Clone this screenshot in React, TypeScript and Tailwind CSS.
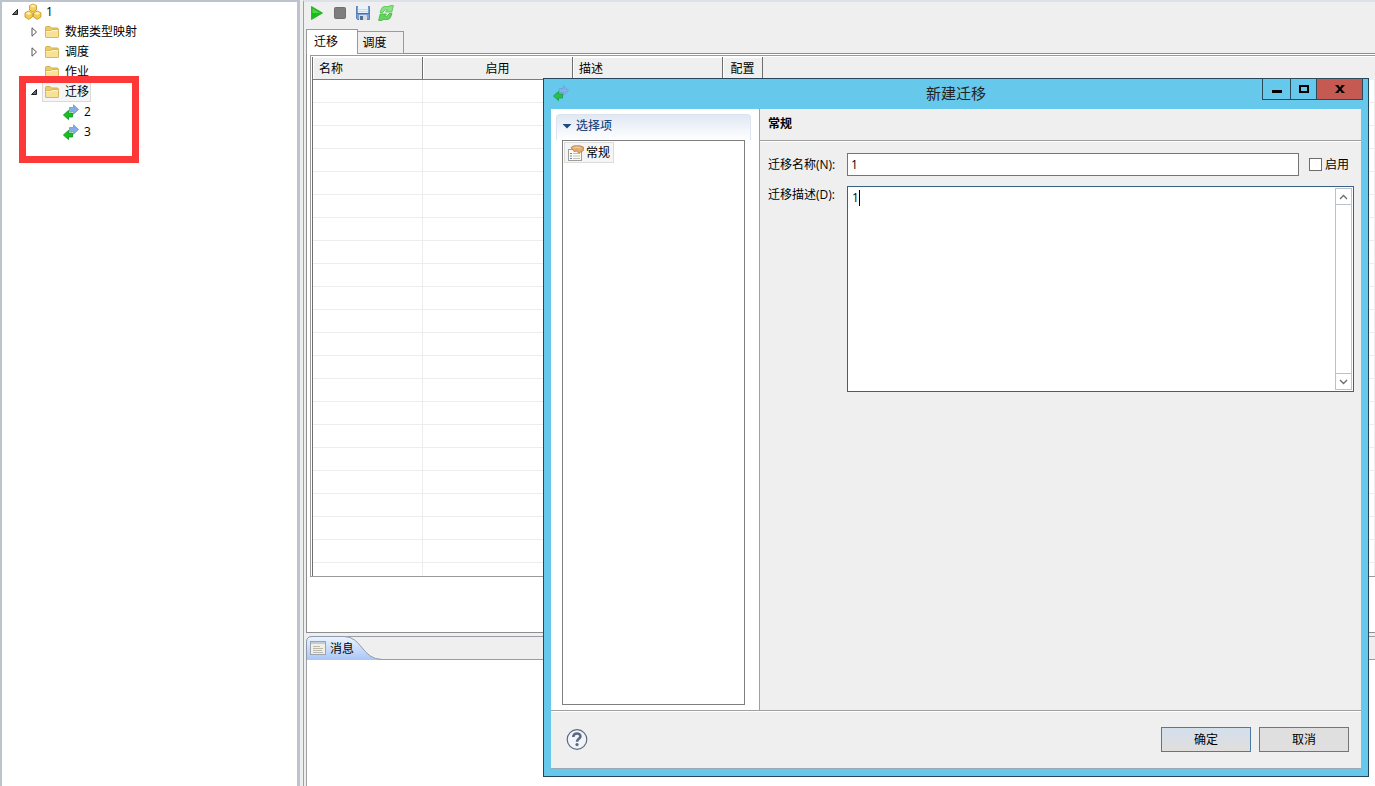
import React, { useState } from "react";

function FolderIcon() {
  return (
    <svg width="16" height="16" viewBox="0 0 16 16" className="shrink-0">
      <path d="M1.5 12.5V3.5Q1.5 2.5 2.5 2.5H6L7.5 4H13Q14.5 4 14.5 5.5V12.5Z" fill="#eccb68" stroke="#d3ae4f" />
      <path d="M1.5 13V7.5Q1.5 6.5 2.5 6.5H6.5L8 5.5H13.5Q14.5 5.5 14.5 6.5V13Q14.5 13.5 14 13.5H2Q1.5 13.5 1.5 13Z" fill="#f7e196" stroke="#d9b75c" />
      <path d="M2.5 7.5H7L8.5 6.5H13.5" stroke="#fff4c4" fill="none" />
    </svg>
  );
}

function MigrateIcon() {
  return (
    <svg width="16" height="16" viewBox="0 0 16 16" className="shrink-0">
      <path d="M6.5 3.5H10.5V0.8L15.6 5.5L10.5 10.2V7.5H6.5Z" fill="#86aee6" stroke="#6b97d6" strokeWidth="0.8" />
      <path d="M9.5 9H5.5V6.4L0.4 11L5.5 15.6V13H9.5Z" fill="#14c21e" stroke="#0b8f16" strokeWidth="0.8" />
    </svg>
  );
}

function ProjectIcon() {
  return (
    <svg width="18" height="18" viewBox="0 0 18 18" className="shrink-0">
      <g stroke="#c99a2c" strokeWidth="0.9" strokeLinejoin="round">
        <path d="M9 1L12.5 2.6V7L9 9L5.5 7V2.6Z" fill="#f5d35a" />
        <path d="M4.7 8L8.4 9.8V14L4.7 16.4L1 14V9.8Z" fill="#f3cd4f" />
        <path d="M13.2 8L16.9 9.8V14L13.2 16.4L9.5 14V9.8Z" fill="#f3cd4f" />
      </g>
      <path
        d="M9 1.6L12 3L9 4.6L6 3ZM4.7 8.7L7.8 10.2L4.7 11.9L1.6 10.2ZM13.2 8.7L16.3 10.2L13.2 11.9L10.1 10.2Z"
        fill="#fdf0b0"
      />
    </svg>
  );
}

function FormIcon() {
  return (
    <svg width="16" height="16" viewBox="0 0 16 16" className="shrink-0">
      <rect x="0.5" y="4.5" width="13" height="11" fill="#fbfaf4" stroke="#a09e94" />
      <path d="M2 8.5H4M2 11H4M2 13.5H4" stroke="#5c86b0" />
      <path d="M5 8.5H12M5 11H12M5 13.5H12" stroke="#c3c1b4" />
      <path d="M3 2.5L6 0.8H12L15.4 2V5.5L11 8L8.5 6.2L6 6.5L5 5Z" fill="#e2ab70" stroke="#b67e45" strokeWidth="0.8" />
      <path d="M5.5 3L9 2L13 3.2" stroke="#f7d5a8" fill="none" />
    </svg>
  );
}

function Twisty({ open }: { open: boolean }) {
  return (
    <svg width="10" height="10" viewBox="0 0 10 10" className="shrink-0">
      {open ? (
        <path d="M7.5 2.5V7.5H2.5Z" fill="#6a6a6a" stroke="#222" />
      ) : (
        <path d="M3 0.8L7.5 5L3 9.2Z" fill="#fff" stroke="#555" />
      )}
    </svg>
  );
}

const folders = [
  { name: "数据类型映射", expandable: true, open: false, children: [] },
  { name: "调度", expandable: true, open: false, children: [] },
  { name: "作业", expandable: false, open: false, children: [] },
  { name: "迁移", expandable: true, open: true, children: ["2", "3"] },
];

function ProjectTree() {
  return (
    <aside className="relative w-[300px] shrink-0 border-t-2 border-r-[3px] border-l-2 border-[#bcc3cd] bg-white">
      <ul role="tree">
        <li role="treeitem" aria-expanded="true">
          <div className="flex h-5 items-center pl-2">
            <Twisty open />
            <span className="ml-1 flex items-center gap-1">
              <ProjectIcon />
              1
            </span>
          </div>
          <ul role="group">
            {folders.map((f) => (
              <li key={f.name} role="treeitem">
                <div className="flex h-5 items-center pl-[27px]">
                  <span className="w-[13px]">{f.expandable && <Twisty open={f.open} />}</span>
                  <span
                    className={`flex h-5 items-center gap-[5px] border px-px ${
                      f.open ? "border-[#dadada] bg-[#f5f5f5]" : "border-transparent"
                    }`}
                  >
                    <FolderIcon />
                    {f.name}
                  </span>
                </div>
                {f.children.length > 0 && (
                  <ul role="group">
                    {f.children.map((c) => (
                      <li key={c} role="treeitem" className="flex h-5 items-center gap-[5px] pl-[61px]">
                        <MigrateIcon />
                        {c}
                      </li>
                    ))}
                  </ul>
                )}
              </li>
            ))}
          </ul>
        </li>
      </ul>
      {/* highlight box */}
      <div className="absolute top-[74px] left-[17px] h-[87px] w-[120px] border-[7px] border-[#fd3839]" />
    </aside>
  );
}

function Toolbar() {
  return (
    <div className="flex h-[27px] items-center gap-[7px] pb-[5px] pl-[3px]">
      <button aria-label="运行">
        <svg width="16" height="16" viewBox="0 0 16 16">
          <path d="M2.5 1.5L13.5 8L2.5 14.5Z" fill="#18bd1b" stroke="#2fb52f" />
          <path d="M3.5 3.5L11 8H3.5Z" fill="#4fd545" />
        </svg>
      </button>
      <button aria-label="停止">
        <svg width="16" height="16" viewBox="0 0 16 16">
          <rect x="2.5" y="2.5" width="11" height="11" rx="1" fill="#7d7d7d" stroke="#6f6f6f" />
        </svg>
      </button>
      <button aria-label="保存">
        <svg width="16" height="16" viewBox="0 0 16 16">
          <path d="M1.5 1.5H14.5V14.5H2.5L1.5 13.5Z" fill="#7d9fd3" stroke="#587fb8" />
          <rect x="3" y="1" width="10" height="7" fill="#eaf3fa" />
          <path d="M3 4.5H13M3 6.5H13" stroke="#c9dbea" />
          <path d="M2 8.5H14" stroke="#4a6fa8" />
          <rect x="4" y="10" width="8" height="5" fill="#d3dae2" />
          <rect x="5" y="11" width="3" height="4" fill="#54708f" />
        </svg>
      </button>
      <button aria-label="刷新">
        <svg width="16" height="16" viewBox="0 0 16 16">
          <path
            d="M2 7.5L3.5 3.5Q4.5 1.5 7 1.5H11L12 0.6H15.4L13.8 7H7.5L9.5 4.8H7.5Q6 4.8 5 7.5Z"
            fill="#8be283"
            stroke="#4cc24a"
            strokeWidth="0.8"
          />
          <path
            d="M14 8.5L12.5 12.5Q11.5 14.5 9 14.5H5L4 15.4H0.6L2.2 9H8.5L6.5 11.2H8.5Q10 11.2 11 8.5Z"
            fill="#62d65b"
            stroke="#3fb63e"
            strokeWidth="0.8"
          />
        </svg>
      </button>
    </div>
  );
}

const thClass =
  "border-r border-b border-r-[#6f6f6f] border-b-[#7d7d7d] px-1.5 pt-0.5 text-left font-normal shadow-[inset_1px_1px_0_#fff]";

function MigrationTable() {
  return (
    <div className="mt-px ml-[3px] h-[522px] overflow-hidden border-y border-l border-[#9a9a9a] pt-px pl-px">
      <table className="w-full table-fixed border-separate border-spacing-0 border-l border-[#6f6f6f]">
        <colgroup>
          <col className="w-[110px]" />
          <col className="w-[150px]" />
          <col className="w-[150px]" />
          <col className="w-10" />
          <col />
        </colgroup>
        <thead>
          <tr className="h-[23px] bg-[#efefef]">
            <th className={thClass}>名称</th>
            <th className={`${thClass} text-center!`}>启用</th>
            <th className={thClass}>描述</th>
            <th className={`${thClass} text-center!`}>配置</th>
            <th className="border-b border-[#efefef]" />
          </tr>
        </thead>
        <tbody>
          {Array.from({ length: 22 }, (_, i) => (
            <tr key={i} className="h-[23px]">
              {Array.from({ length: 5 }, (_, j) => (
                <td key={j} className="border-r border-b border-[#ededed] p-0" />
              ))}
            </tr>
          ))}
        </tbody>
      </table>
    </div>
  );
}

function MessagePanel() {
  return (
    <section className="mt-[3px] flex h-[150px] flex-col border-l border-[#a0a0a0] bg-white">
      <div className="relative h-6 border-y border-[#9a9ea4] bg-[#efefef]">
        <svg width="80" height="24" viewBox="0 0 80 24" className="absolute -top-px -left-px">
          <defs>
            <linearGradient id="tabFill" x1="0" y1="0" x2="0" y2="1">
              <stop offset="0" stopColor="#edf4fd" />
              <stop offset="1" stopColor="#a9c6f8" />
            </linearGradient>
          </defs>
          <path d="M0 0H6Q0.5 0.5 0.5 6H0Z" fill="#efefef" />
          <path d="M0.5 24V6Q0.5 0.5 6 0.5H38C56 0.5 56 23.5 76 23.5V24Z" fill="url(#tabFill)" />
          <path d="M0.5 24V6Q0.5 0.5 6 0.5H38C56 0.5 56 23.5 76 23.5" fill="none" stroke="#8d9aac" />
        </svg>
        <div className="relative flex h-6 items-center gap-1 pl-[3px]">
          <svg width="16" height="14" viewBox="0 0 16 14" className="-mt-0.5">
            <rect x="0.5" y="0.5" width="15" height="13" fill="#f2efe6" stroke="#9ba3ae" />
            <path d="M1 2H15" stroke="#c2cddc" strokeWidth="2" />
            <path d="M3 5.5H10M3 7.5H13M3 9.5H12M3 11.5H13" stroke="#bcb9ae" />
          </svg>
          消息
        </div>
      </div>
    </section>
  );
}

function TitleBar() {
  return (
    <header className="relative flex h-[30px] justify-between">
      <div className="mt-1.5 ml-[9px] opacity-80">
        <MigrateIcon />
      </div>
      <h1 className="absolute inset-x-0 top-0.5 text-center text-[15px] leading-6 text-[#222]">新建迁移</h1>
      <div className="relative -mt-px mr-[5px] flex h-[22px] border border-[#2b4a5a]">
        <button aria-label="最小化" className="flex w-7 items-center justify-center border-r border-[#2b4a5a]">
          <svg width="10" height="10">
            <rect y="6" width="10" height="3" fill="#000" />
          </svg>
        </button>
        <button aria-label="最大化" className="flex w-[26px] items-center justify-center border-r border-[#2b4a5a]">
          <svg width="10" height="8">
            <rect x="1" y="1" width="8" height="6" fill="none" stroke="#000" strokeWidth="2" />
          </svg>
        </button>
        <button aria-label="关闭" className="flex w-[45px] items-center justify-center bg-[#c45a52]">
          <svg width="10" height="8">
            <path d="M1.5 0L8.5 8M8.5 0L1.5 8" stroke="#000" strokeWidth="2" />
            <path d="M0.5 0.5H3.5M6.5 0.5H9.5M0.5 7.5H3.5M6.5 7.5H9.5" stroke="#000" />
          </svg>
        </button>
      </div>
    </header>
  );
}

function NewMigrationDialog() {
  const [name, setName] = useState("1");
  const [desc, setDesc] = useState("1");
  const [enabled, setEnabled] = useState(false);

  return (
    <div
      role="dialog"
      className="absolute top-[78px] right-1.5 bottom-[9px] left-[543px] flex flex-col border border-[#24455a] bg-[#66c8eb] px-[7px] pb-[7px]"
    >
      <div className="-mx-[7px]">
        <TitleBar />
      </div>
      <div className="flex min-h-0 flex-1 bg-[#efefef]">
        {/* options */}
        <div className="flex w-[209px] shrink-0 flex-col border-r border-[#a0a0a0] bg-white pt-[5px] pr-2 pb-[5px] pl-[5px]">
          <div className="flex h-[26px] items-center gap-1 rounded-t-sm border-x border-t border-[#dbe4f0] bg-linear-to-b from-[#e1e8f3] to-white px-[5px] pb-1 font-medium text-[#1f4a80]">
            <svg width="10" height="10" viewBox="0 0 10 10">
              <path d="M0.5 3H9.5L5 7.5Z" fill="#1f4a80" />
            </svg>
            选择项
          </div>
          <ul className="mr-1.5 ml-1.5 flex-1 border border-[#7f7f7f] p-px">
            <li className="flex h-[21px] w-[50px] items-center gap-0.5 border border-[#dcdcdc] bg-[#f5f5f5] pl-[3px]">
              <FormIcon />
              常规
            </li>
          </ul>
        </div>

        {/* general settings */}
        <form className="flex min-w-0 flex-1 flex-col">
          <h2 className="h-8 border-b border-[#a0a0a0] px-2 leading-[29px] font-bold shadow-[0_1px_0_#fff]">常规</h2>
          <div className="mt-3 flex h-[23px] items-center pr-3 pl-2">
            <label htmlFor="name" className="w-[79px] shrink-0">
              迁移名称(N):
            </label>
            <input
              id="name"
              type="text"
              value={name}
              onChange={(e) => setName(e.target.value)}
              className="h-[23px] min-w-0 flex-1 border border-[#757575] bg-white px-[3px] outline-none"
            />
            <input
              id="enabled"
              type="checkbox"
              checked={enabled}
              onChange={(e) => setEnabled(e.target.checked)}
              className="ml-2.5 size-[13px] appearance-none border border-[#6d6d6d] bg-white checked:bg-[#3c7fb1]"
            />
            <label htmlFor="enabled" className="ml-[3px]">
              启用
            </label>
          </div>
          <div className="mt-2.5 flex pr-[7px] pl-2">
            <label htmlFor="desc" className="w-[79px] shrink-0">
              迁移描述(D):
            </label>
            <div className="relative flex h-[206px] flex-1 border border-[#3a6186] bg-white p-px">
              <textarea
                id="desc"
                value={desc}
                onChange={(e) => setDesc(e.target.value)}
                className="flex-1 resize-none px-[3px] pt-px outline-none"
              />
              <span className="absolute top-[3px] left-[11px] h-4 w-px bg-black" />
              <div className="flex w-[17px] flex-col justify-between border border-[#b8c2c8]">
                <button type="button" aria-label="向上" className="flex h-4 items-center justify-center border-b border-[#b8c2c8]">
                  <svg width="9" height="6">
                    <path d="M1 5L4.5 1.5L8 5" fill="none" stroke="#6b6b6b" strokeWidth="1.3" />
                  </svg>
                </button>
                <button type="button" aria-label="向下" className="flex h-4 items-center justify-center border-t border-[#b8c2c8]">
                  <svg width="9" height="6">
                    <path d="M1 1L4.5 4.5L8 1" fill="none" stroke="#6b6b6b" strokeWidth="1.3" />
                  </svg>
                </button>
              </div>
            </div>
          </div>
        </form>
      </div>
      <footer className="flex h-[59px] items-center gap-2 border-t border-b border-t-[#a0a0a0] border-b-[#9aa7b5] bg-[#efefef] pr-3 pl-[15px] shadow-[inset_0_1px_0_#fff]">
        <button aria-label="帮助" className="mr-auto">
          <svg width="22" height="22" viewBox="0 0 22 22">
            <circle cx="11" cy="10.5" r="9.8" fill="#f1f4f9" stroke="#5d6980" strokeWidth="1.2" />
            <path d="M7.3 8C7.5 3.4 14.7 3.6 14.4 7.6C14.2 9.9 11.1 9.8 11 12.8" fill="none" stroke="#5d6980" strokeWidth="2.6" />
            <circle cx="11" cy="15.6" r="1.6" fill="#5d6980" />
          </svg>
        </button>
        <button className="h-[25px] w-[90px] border border-[#4a7ba6] bg-linear-to-b from-[#d3dfeb] to-[#e0dedd] pt-px">
          确定
        </button>
        <button className="h-[25px] w-[90px] border border-[#757575] bg-[#dfdfdf] pt-px">取消</button>
      </footer>
    </div>
  );
}

export default function App() {
  return (
    <div className="relative flex h-screen overflow-hidden bg-[#efefef] font-['Open_Sans','Noto_Sans_CJK_SC',sans-serif] text-[12px] leading-[18px] text-black">
      <ProjectTree />
      <main className="ml-[3px] flex min-w-0 flex-1 flex-col border-t-2 border-l border-t-[#dce2e8] border-l-[#a0a0a0] pl-0.5">
        <Toolbar />
        <div role="tablist" className="relative -mb-px flex items-end">
          <button role="tab" aria-selected="true" className="h-[25px] w-[52px] border-x border-t border-[#9a9a9a] bg-white pr-3">
            迁移
          </button>
          <button role="tab" aria-selected="false" className="-ml-px h-[23px] w-[47px] border border-[#9a9a9a] bg-[#efefef] pr-3">
            调度
          </button>
        </div>
        <div className="min-h-0 flex-1 border-y border-l border-[#8e8e8e] bg-white">
          <MigrationTable />
        </div>
        <MessagePanel />
      </main>
      <NewMigrationDialog />
    </div>
  );
}
